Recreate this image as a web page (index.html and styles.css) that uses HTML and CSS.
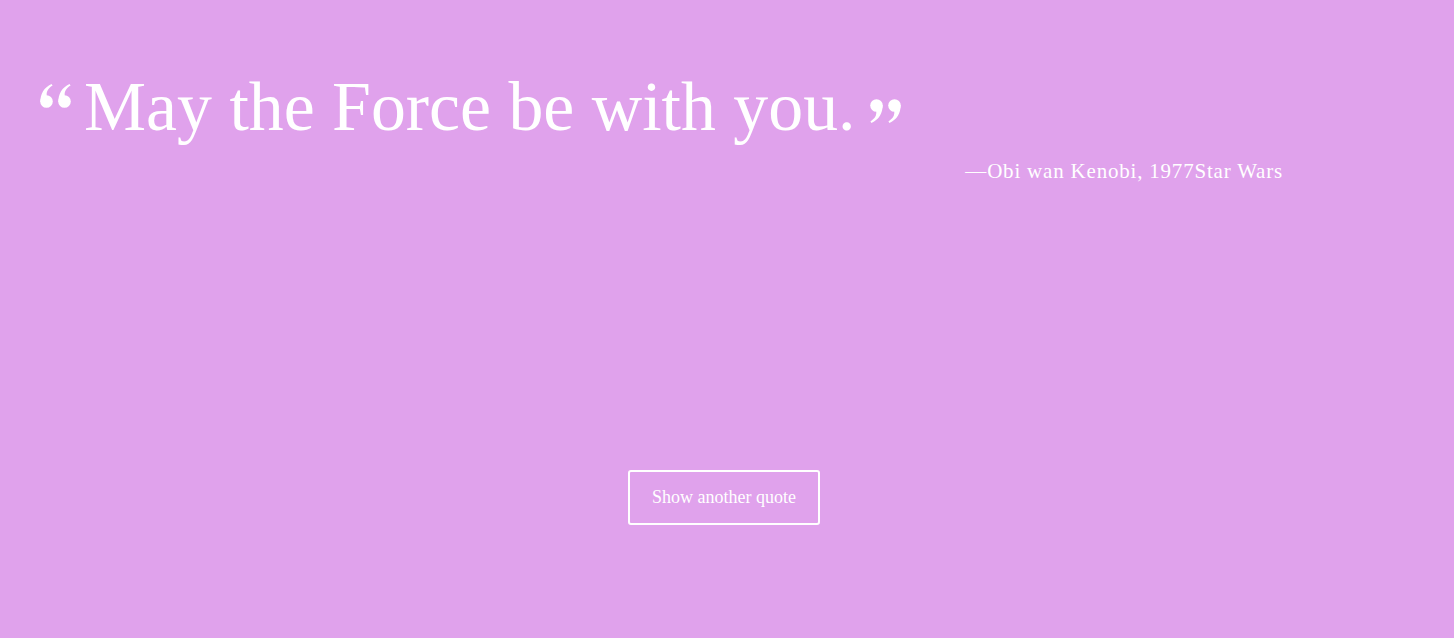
FILE: index.html
```html
<!DOCTYPE html>
<html lang="en">
<head>
<meta charset="utf-8">
<title>Quote</title>
<link rel="stylesheet" href="styles.css">
</head>
<body>
<main class="page">
  <section class="quote-box">
    <div class="quote-row">
      <svg class="mark mark-open" viewBox="0 0 32 24" aria-hidden="true">
        <g fill="#fff">
          <circle cx="6.5" cy="17.5" r="6.3"/>
          <path d="M0.4,18 C0.2,10 4,3.5 11.5,0 L12.6,1.6 C8,4.5 6.2,8 6.8,11.5 Z"/>
          <circle cx="24.5" cy="17.5" r="6.3"/>
          <path d="M18.4,18 C18.2,10 22,3.5 29.5,0 L30.6,1.6 C26,4.5 24.2,8 24.8,11.5 Z"/>
        </g>
      </svg>
      <blockquote class="quote-text">May the Force be with you.</blockquote>
      <svg class="mark mark-close" viewBox="0 0 32 24" aria-hidden="true">
        <g fill="#fff" transform="rotate(180 16 12)">
          <circle cx="6.5" cy="17.5" r="6.3"/>
          <path d="M0.4,18 C0.2,10 4,3.5 11.5,0 L12.6,1.6 C8,4.5 6.2,8 6.8,11.5 Z"/>
          <circle cx="24.5" cy="17.5" r="6.3"/>
          <path d="M18.4,18 C18.2,10 22,3.5 29.5,0 L30.6,1.6 C26,4.5 24.2,8 24.8,11.5 Z"/>
        </g>
      </svg>
    </div>
    <p class="author">—Obi wan Kenobi, 1977Star Wars</p>
  </section>
  <div class="actions">
    <button class="btn" type="button">Show another quote</button>
  </div>
</main>
</body>
</html>
```

FILE: styles.css
```css
html, body {
  margin: 0;
  padding: 0;
}

body {
  background: #e0a2ec;
  color: #fff;
  font-family: "Liberation Serif", "DejaVu Serif", serif;
  height: 638px;
  overflow: hidden;
}

.page {
  display: flex;
  flex-direction: column;
}

.quote-box {
  padding: 62px 171px 0 40px;
}

.quote-row {
  display: flex;
  align-items: flex-start;
}

.mark {
  width: 32px;
  height: 24px;
  flex: none;
}

.mark-open {
  margin-top: 22px;
  margin-right: 12px;
}

.mark-close {
  margin-top: 37px;
  margin-left: 14px;
}

.quote-text {
  margin: 0;
  font-size: 69.8px;
  line-height: 90px;
  font-weight: 400;
  letter-spacing: 0;
}

.author {
  margin: 0;
  margin-top: 5px;
  text-align: right;
  font-size: 21px;
  line-height: 28px;
  letter-spacing: 0.8px;
}

.actions {
  display: flex;
  justify-content: center;
  padding-top: 285px;
  padding-right: 6px;
}

.btn {
  width: 192px;
  height: 55px;
  background: transparent;
  border: 2px solid #fff;
  border-radius: 3px;
  color: #fff;
  font-family: "Liberation Serif", "DejaVu Serif", serif;
  font-size: 18px;
  padding: 0;
  cursor: pointer;
}
```
